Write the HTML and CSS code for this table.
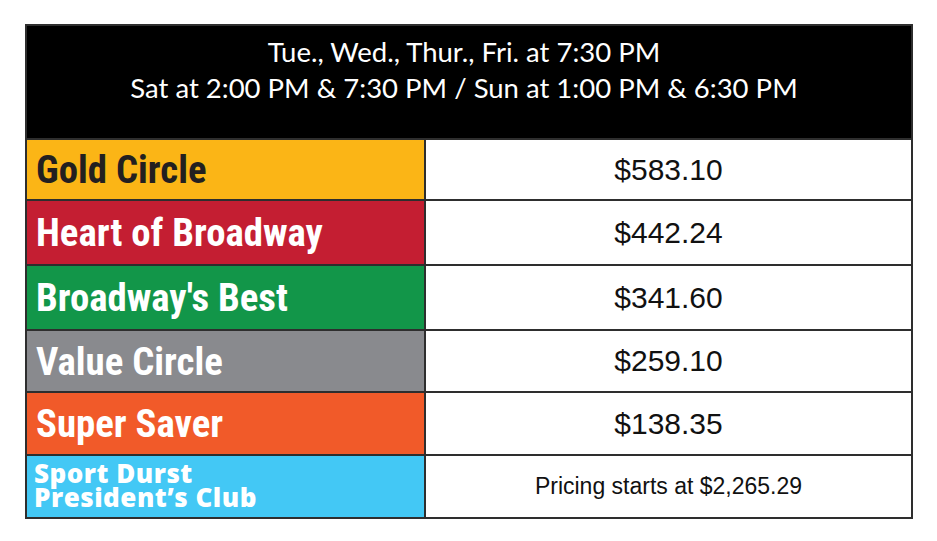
FILE: index.html
```html
<!DOCTYPE html>
<html>
<head>
<meta charset="utf-8">
<link rel="stylesheet" href="styles.css">
</head>
<body>
<div class="table">
  <div class="head">
    <div class="head-line">Tue., Wed., Thur., Fri. at 7:30 PM</div>
    <div class="head-line">Sat at 2:00 PM &amp; 7:30 PM / Sun at 1:00 PM &amp; 6:30 PM</div>
  </div>
  <div class="row r-gold">
    <div class="label dark">Gold Circle</div>
    <div class="price">$583.10</div>
  </div>
  <div class="row r-red">
    <div class="label">Heart of Broadway</div>
    <div class="price">$442.24</div>
  </div>
  <div class="row r-green">
    <div class="label">Broadway's Best</div>
    <div class="price">$341.60</div>
  </div>
  <div class="row r-gray">
    <div class="label">Value Circle</div>
    <div class="price">$259.10</div>
  </div>
  <div class="row r-orange">
    <div class="label">Super Saver</div>
    <div class="price">$138.35</div>
  </div>
  <div class="row r-cyan">
    <div class="label club"><span class="club-line">Sport Durst</span><span class="club-line">President’s Club</span></div>
    <div class="price small">Pricing starts at $2,265.29</div>
  </div>
</div>
</body>
</html>
```
FILE: styles.css
```css
html, body {
  margin: 0;
  padding: 0;
  background: #fff;
}
body {
  padding: 24px 0 0 25px;
}
.table {
  width: 888px;
  box-sizing: border-box;
  border: 2px solid #2e2e2e;
  display: flex;
  flex-direction: column;
}
.head {
  background: #000;
  height: 112px;
  box-sizing: border-box;
  padding-top: 8px;
  padding-right: 10px;
  display: flex;
  flex-direction: column;
  align-items: center;
  color: #fff;
  font-family: Lato, "Open Sans", sans-serif;
  font-size: 27.5px;
  line-height: 36px;
}
.row {
  display: grid;
  grid-template-columns: 399px 1fr;
  border-top: 2px solid #2e2e2e;
  box-sizing: border-box;
}
.r-gold { height: 61px; }
.r-red { height: 65px; }
.r-green { height: 65px; }
.r-gray { height: 62px; }
.r-orange { height: 63px; }
.r-cyan { height: 63px; }
.label {
  border-right: 2px solid #2e2e2e;
  display: flex;
  align-items: center;
  padding-left: 9px;
  font-family: "Roboto Condensed", "Liberation Sans Narrow", Roboto, sans-serif;
  font-weight: 700;
  font-size: 38.8px;
  color: #fff;
}
.label.dark { color: #231f20; }
.r-gold .label { background: #fbb516; }
.r-red .label { background: #c41e32; }
.r-green .label { background: #129649; }
.r-gray .label { background: #898a8e; }
.r-orange .label { background: #f15a29; }
.r-cyan .label { background: #43c8f5; }
.label.club {
  flex-direction: column;
  align-items: flex-start;
  justify-content: center;
  font-family: "Open Sans", Lato, sans-serif;
  font-weight: 800;
  font-size: 26px;
  line-height: 24px;
  letter-spacing: 0.5px;
  padding-left: 7px;
  padding-bottom: 3px;
}
.club-line {
  display: block;
  height: 24px;
}
.price {
  display: flex;
  align-items: center;
  justify-content: center;
  font-family: "Liberation Sans", Arial, sans-serif;
  font-size: 30px;
  color: #111;
  background: #fff;
}
.price.small {
  font-size: 23px;
}
```
